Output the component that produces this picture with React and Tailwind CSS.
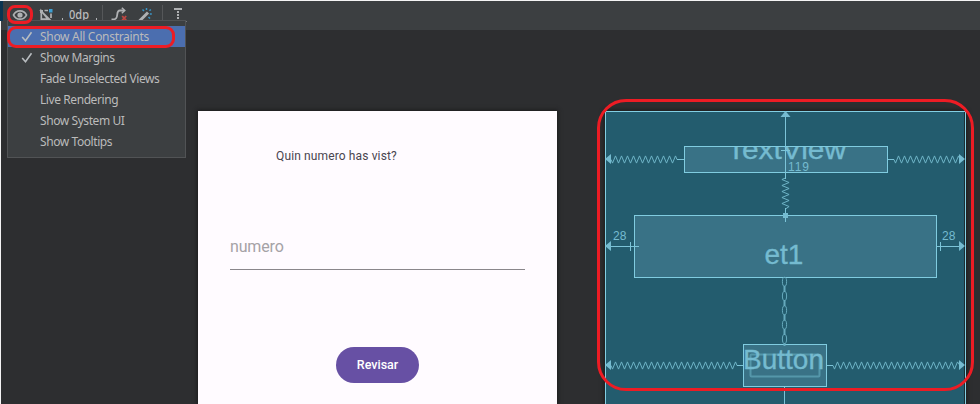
import React from "react";

const zigzagX = (from, to, y, flip = 1) => {
  let d = `M${from} ${y}`;
  let up = true;
  for (let x = from + 1.5; x < to; x += 3) {
    d += ` L${x} ${y + (up ? 3.6 : -3.6) * flip}`;
    up = !up;
  }
  return `${d} L${to} ${y}`;
};

const zigzagY = (from, to, x) => {
  let d = `M${x} ${from}`;
  let side = -1;
  for (let y = from + 1.5; y < to; y += 3) {
    d += ` L${x + 3.6 * side} ${y}`;
    side = -side;
  }
  return `${d} L${x} ${to}`;
};

const menuItems = [
  { label: "Show All Constraints", checked: true, active: true },
  { label: "Show Margins", checked: true },
  { label: "Fade Unselected Views" },
  { label: "Live Rendering" },
  { label: "Show System UI" },
  { label: "Show Tooltips" },
];

function Check() {
  return (
    <svg width="12" height="12" viewBox="0 0 12 12" fill="none" stroke="#b9bdc0" strokeWidth="1.6">
      <path d="M1.2 6 L4.5 9.7 L10.5 1.2" />
    </svg>
  );
}

function Toolbar() {
  return (
    <header className="flex h-[29px] items-start bg-[#3c3f41] pl-[3px]">
      <svg width="200" height="28" viewBox="4 1 200 28" fill="none" stroke="#afb1b3">
        {/* visibility */}
        <path d="M13.5 15 C16 9.4 24 9.4 26.5 15 C24 20.6 16 20.6 13.5 15Z" strokeWidth="1.8" />
        <circle cx="20" cy="15" r="2.6" fill="#afb1b3" stroke="none" />
        {/* autoconnect */}
        <path d="M41.3 11 V19.2 H48 Z M40 10 L52.3 22" strokeWidth="1.7" />
        <path d="M44.5 10.5 H48 M51 13.5 V18" strokeWidth="1.7" />
        <rect x="40" y="10" width="3" height="3" fill="#afb1b3" stroke="none" />
        <rect x="49" y="9" width="3.5" height="3.5" fill="#3d9fd3" stroke="none" />
        <path d="M62.5 18 V20 M96.5 18 V20" strokeWidth="1" />
        <text x="69" y="19" fill="#bbbdbf" stroke="none" fontSize="12" fontWeight="500" fontFamily="Noto Sans, sans-serif" textLength="20" lengthAdjust="spacingAndGlyphs">0dp</text>
        <path d="M102.5 5 V20 M162.5 5 V20" stroke="#555759" strokeWidth="1" />
        {/* clear constraints */}
        <path d="M111.5 19.3 H114 C119.5 19.3 115 10.5 120 10.5 H124" strokeWidth="1.8" />
        <path d="M121.8 7.8 L124.8 10.5 L121.8 13.2" strokeWidth="1.5" />
        <path d="M122.2 16 L126.2 20.3 M126.2 16 L122.2 20.3" stroke="#bd4743" strokeWidth="1.8" />
        {/* infer constraints */}
        <path d="M139.5 21 L148 12.5" strokeWidth="3" />
        <path d="M142.5 9.5 l1.5 1.5 M146.5 8 v2 M150.8 9.5 l-1.3 1.3 M149.8 14 h2 M148.5 17 l1.5 1.5" stroke="#3995c6" strokeWidth="1.5" />
        {/* default margins */}
        <path d="M174 9 H182" strokeWidth="2" />
        <path d="M178 11 V20" strokeWidth="2" strokeDasharray="2 1" />
        <path d="M185 21.5 h1.5" strokeWidth="1" />
      </svg>
    </header>
  );
}

function ViewMenu() {
  return (
    <div className="absolute left-[7px] top-5 h-[138px] w-[179px] border border-[#515355] bg-[#3c3f41] pt-[5px]">
      {menuItems.map((item) => (
        <div
          key={item.label}
          className={`flex h-[21px] items-center pl-[13px] font-["Noto_Sans",sans-serif] text-[12px] leading-[21px] whitespace-nowrap text-[#bbbbbb] ${
            item.active ? "bg-[#4b6eaf] tracking-[-0.3px]" : "tracking-[-0.42px]"
          }`}
        >
          <span className="flex w-[19px]">{item.checked && <Check />}</span>
          <span>{item.label}</span>
        </div>
      ))}
    </div>
  );
}

function Preview() {
  return (
    <section className="flex h-[293px] w-[359px] flex-col bg-[#fffbff] pl-8 font-[Roboto,sans-serif] shadow-[0_0_4px_1px_#1b1b1c]">
      <p className="mt-[36px] ml-[46px] text-[12px] leading-[18px] tracking-[0.13px] text-[#49454f]">Quin numero has vist?</p>
      <div className="mt-[67px] h-[38px] w-[295px] border-b border-[#8a868b] pt-[3px] text-[16px] leading-6 tracking-[-0.15px] text-[#a5a2a6]">
        numero
      </div>
      <button className="mt-[77px] ml-[106px] h-9 w-[83px] rounded-full bg-[#6750a4] pt-px text-[12.5px] font-medium text-white">
        Revisar
      </button>
    </section>
  );
}

function Blueprint() {
  return (
    <svg className="block" width="361" height="293" viewBox="605 111 361 293" fill="none" stroke="#7cc4d8">
      <defs>
        <clipPath id="textViewClip">
          <rect x="684" y="147" width="204" height="26" />
        </clipPath>
      </defs>
      <rect x="605" y="111" width="361" height="300" fill="#235c6e" stroke="none" />
      <path d="M964.5 112 V404" stroke="#1c2c32" />
      <path d="M605.5 404 V111.5 H965.5 V404" stroke="#82cfe3" />

      <g fill="#397286" stroke="#80cce0">
        <rect x="684.5" y="146.5" width="203" height="26" />
        <rect x="634.5" y="215.5" width="302" height="62" />
        <rect x="743.5" y="344.5" width="83" height="42" />
      </g>
      <rect x="750.5" y="354.5" width="69" height="22" rx="1" stroke="#5597aa" strokeWidth="2" />

      <g fill="#75bbd0" stroke="#75bbd0" strokeWidth="0.35" fontFamily="Liberation Sans, Arial, sans-serif" fontSize="28">
        <text x="727" y="159" clipPath="url(#textViewClip)" textLength="119" lengthAdjust="spacingAndGlyphs">TextView</text>
        <text x="764.5" y="264">et1</text>
        <text x="743" y="369">Button</text>
      </g>
      <g fill="#75bbd0" stroke="none" fontFamily="Liberation Sans, Arial, sans-serif" fontSize="12">
        <text x="613" y="240">28</text>
        <text x="942" y="240">28</text>
        <text x="788" y="171" textLength="21">119</text>
      </g>

      <g stroke="#6eb4c7" strokeWidth="1">
        <path d={zigzagX(611, 677, 159.5)} />
        <path d={zigzagX(894, 960, 159.5)} />
        <path d={zigzagX(611, 737, 365.5)} />
        <path d={zigzagX(833, 960, 365.5)} />
        <path d={zigzagY(178, 209, 785.5)} />
      </g>
      <g>
        <path d="M677 159.5 H684 M888 159.5 H894 M737 365.5 H743 M827 365.5 H833" />
        <path d="M610 246.5 H639 M630.5 242 V251 M937 246.5 H960 M940.5 242 V251" />
        <path d="M785.5 116 V179 M781 150.5 H790 M785.5 208 V222 M784.5 387 V404" />
      </g>
      <g fill="#75bbd0" stroke="none">
        <path d="M605 159 L611 154 V164Z M605 246 L611 241 V251Z M605 365 L611 360 V370Z" />
        <path d="M965 159 L959 154 V164Z M965 246 L959 241 V251Z M965 365 L959 360 V370Z" />
        <path d="M785.5 111 L780.5 117 H790.5Z" />
        <rect x="783" y="213" width="5" height="5" />
      </g>
      <g stroke="#66aabd">
        {[281.7, 296, 310.3, 324.7, 339].map((y) => (
          <ellipse key={y} cx="784.5" cy={y} rx="2.1" ry="4.5" />
        ))}
        <path d="M784.5 286 V292 M784.5 300 V306 M784.5 314.5 V320.5 M784.5 329 V335 M784.5 343 V346" strokeWidth="2" />
      </g>
    </svg>
  );
}

export default function App() {
  return (
    <div className="relative h-[404px] w-[980px] overflow-hidden bg-[#2d2e30]">
      <div className="h-full border-t border-l border-[#f4f4f4]">
        <Toolbar />
        <main className="flex gap-12 pt-[81px] pl-[197px]">
          <Preview />
          <div className="shadow-[0_0_4px_1px_#1b1b1c]">
            <Blueprint />
          </div>
        </main>
      </div>
      <div className="absolute left-0 top-px h-5 w-[3px] bg-[#0b3551]" />
      <ViewMenu />
      <div className="absolute left-[7px] top-[5px] h-[19px] w-[26px] rounded-[8px] border-[3px] border-[#ed1c24]" />
      <div className="absolute left-[7px] top-[26px] h-[22px] w-[168px] rounded-[9px] border-[3px] border-[#ed1c24]" />
      <div className="absolute left-[597px] top-[99px] h-[292px] w-[377px] rounded-[29px] border-[3px] border-[#ed1c24]" />
    </div>
  );
}
